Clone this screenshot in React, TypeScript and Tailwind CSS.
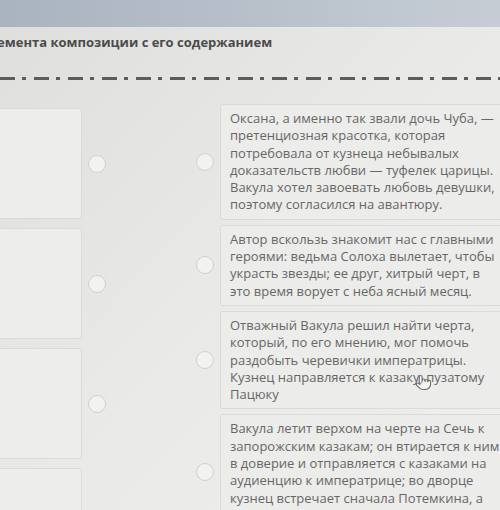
import { Pointer } from "lucide-react";

// Matching exercise: blank slots on the left, draggable descriptions on the right.
const FONT = { fontFamily: '"Open Sans", "Noto Sans", sans-serif' };

const OPTIONS: string[][] = [
  [
    "Оксана, а именно так звали дочь Чуба, —",
    "претенциозная красотка, которая",
    "потребовала от кузнеца небывалых",
    "доказательств любви — туфелек царицы.",
    "Вакула хотел завоевать любовь девушки,",
    "поэтому согласился на авантюру.",
  ],
  [
    "Автор вскользь знакомит нас с главными",
    "героями: ведьма Солоха вылетает, чтобы",
    "украсть звезды; ее друг, хитрый черт, в",
    "это время ворует с неба ясный месяц.",
  ],
  [
    "Отважный Вакула решил найти черта,",
    "который, по его мнению, мог помочь",
    "раздобыть черевички императрицы.",
    "Кузнец направляется к казаку, пузатому",
    "Пацюку",
  ],
  [
    "Вакула летит верхом на черте на Сечь к",
    "запорожским казакам; он втирается к ним",
    "в доверие и отправляется с казаками на",
    "аудиенцию к императрице; во дворце",
    "кузнец встречает сначала Потемкина, а",
    "после и императрицу. Вакула просит",
  ],
];

function Radio() {
  return (
    <div className="w-[18px] h-[18px] rounded-full border-[1.5px] border-[#cfcfcd] bg-[#f2f2f0] shrink-0" />
  );
}

export default function App() {
  return (
    <div
      className="w-[500px] h-[510px] overflow-hidden bg-gradient-to-br from-[#dededc] via-[#e9e9e7] to-[#efefed]"
      style={FONT}
    >
      {/* top bar */}
      <div className="h-[27px] bg-gradient-to-r from-[#a9b3bf] to-[#c6cdd5]" />

      <div className="h-[31px] flex items-center whitespace-nowrap">
        <span className="ml-[-18px] text-[13px] font-bold text-[#4b4b4b]">
          элемента композиции с его содержанием
        </span>
      </div>

      <div className="mt-[19px] h-[3px] bg-[repeating-linear-gradient(90deg,#5c5c5c_0_15px,transparent_15px_22px,#5c5c5c_22px_26px,transparent_26px_34px)]" />

      <div className="flex mt-[24px]">
        {/* answer slots */}
        <div className="w-[196px] shrink-0 flex flex-col gap-[9px] pt-[4px]">
          {[0, 1, 2, 3].map((i) => (
            <div key={i} className="flex items-center gap-[6px]">
              <div className="w-[82px] h-[111px] rounded-r-[3px] border border-l-0 border-[#dadad8] bg-[#ededeb]" />
              <Radio />
            </div>
          ))}
        </div>

        {/* descriptions */}
        <div className="flex flex-col gap-[5px]">
          {OPTIONS.map((lines, i) => (
            <div key={i} className="flex items-center gap-[6px]">
              <Radio />
              <div className="relative w-[300px] rounded-[3px] border border-[#dadad8] bg-[#ececea] pl-[9px] py-[5px] text-[13px] leading-[17.3px] text-[#676767] whitespace-nowrap">
                {lines.map((l, j) => (
                  <div key={j}>{l}</div>
                ))}
                {i === 2 && (
                  <Pointer
                    size={17}
                    strokeWidth={1.5}
                    className="absolute left-[194px] top-[62px] text-[#6a6a6a] fill-[#f4f4f2]"
                  />
                )}
              </div>
            </div>
          ))}
        </div>
      </div>
    </div>
  );
}
